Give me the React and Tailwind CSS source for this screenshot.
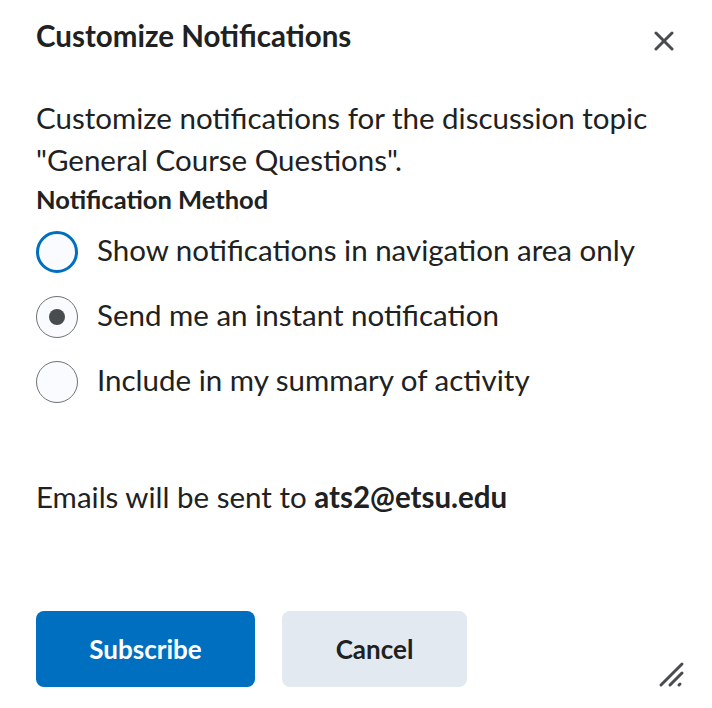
function Radio({ checked, focused, label }) {
  return (
    <label className="flex items-center gap-[19px]">
      <span
        className={
          "flex h-[42px] w-[42px] shrink-0 items-center justify-center rounded-full bg-[#f9fbff] " +
          (focused ? "border-[3px] border-[#006fbf]" : "border border-[#6e7376]")
        }
      >
        {checked && <span className="h-[16px] w-[16px] rounded-full bg-[#494c4e]" />}
      </span>
      <span className="pb-[4px] text-[29.5px] leading-none text-[#202122]">{label}</span>
    </label>
  );
}

export default function App() {
  return (
    <div
      className="relative h-[708px] w-[712px] overflow-hidden bg-white text-[#202122]"
      style={{ fontFamily: "Lato, 'Noto Sans', sans-serif" }}
    >
      <div className="flex items-start justify-between pl-[36px] pr-[38px] pt-[20px]">
        <h1 className="text-[29.5px] font-bold leading-[32px]">Customize Notifications</h1>
        <button type="button" className="mt-[11px]">
          <svg width="20" height="20" viewBox="0 0 20 20" stroke="#494c4e" strokeWidth="3" strokeLinecap="round">
            <line x1="2" y1="2" x2="18" y2="18" />
            <line x1="18" y1="2" x2="2" y2="18" />
          </svg>
        </button>
      </div>

      <div className="flex flex-col px-[36px] pt-[45px]">
        <p className="text-[29.5px] leading-[42px]">
          Customize notifications for the discussion topic
          <br />
          "General Course Questions".
        </p>
        <p className="mt-[2px] text-[25.5px] font-bold leading-[32px]">Notification Method</p>

        <div className="mt-[16px] flex flex-col gap-[23px]">
          <Radio focused label="Show notifications in navigation area only" />
          <Radio checked label="Send me an instant notification" />
          <Radio label="Include in my summary of activity" />
        </div>

        <p className="mt-[78px] text-[29.5px] leading-[32px]">
          Emails will be sent to <span className="font-bold">ats2@etsu.edu</span>
        </p>

        <div className="mt-[98px] flex gap-[27px]">
          <button
            type="button"
            className="h-[76px] w-[219px] rounded-[8px] bg-[#006fbf] text-[26px] font-bold text-white"
          >
            Subscribe
          </button>
          <button
            type="button"
            className="h-[76px] w-[185px] rounded-[8px] bg-[#e3e9f1] text-[26px] font-bold text-[#202122]"
          >
            Cancel
          </button>
        </div>
      </div>

      <svg
        className="absolute bottom-[20px] right-[27px]"
        width="28"
        height="28"
        viewBox="0 0 28 28"
        fill="none"
        stroke="#494c4e"
        strokeWidth="3"
        strokeLinecap="round"
      >
        <line x1="4" y1="25" x2="25" y2="4" />
        <line x1="13" y1="25" x2="25" y2="13" />
        <line x1="22" y1="25" x2="23" y2="24" />
      </svg>
    </div>
  );
}
